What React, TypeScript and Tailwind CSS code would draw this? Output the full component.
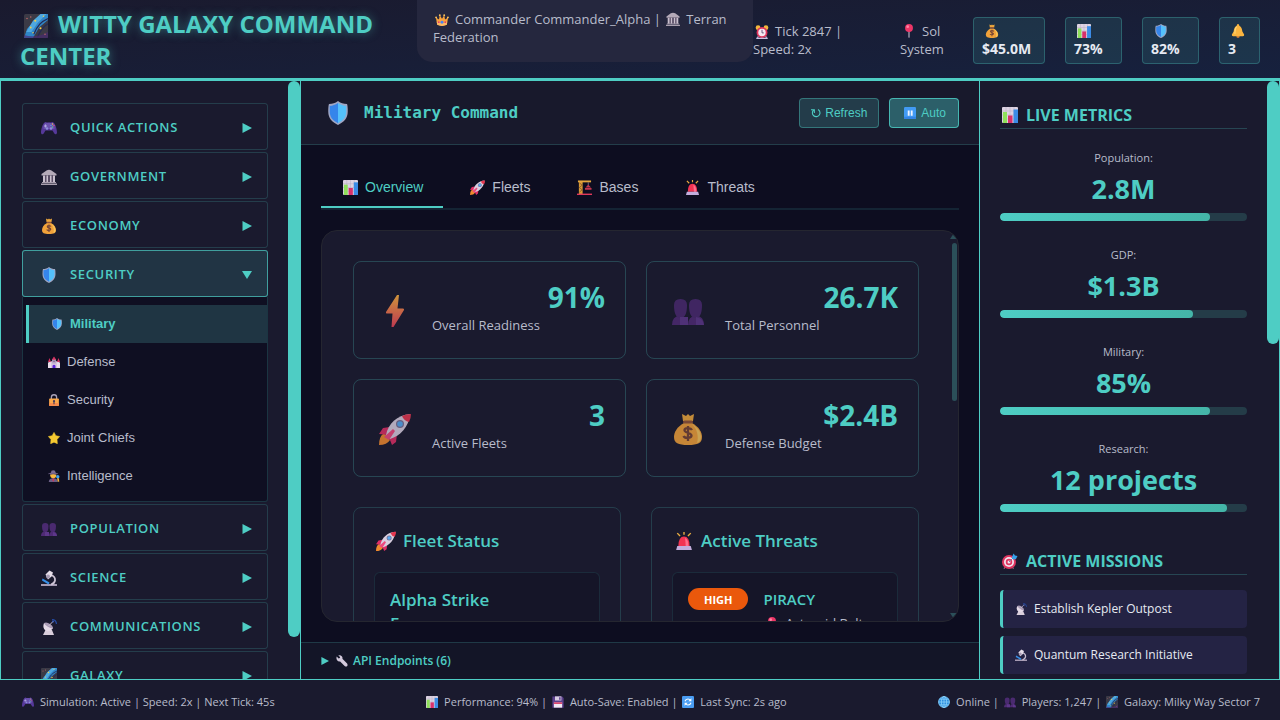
import type { ReactNode } from 'react';

const art: Record<string, ReactNode> = {
  galaxy: (
    <>
      <rect width="32" height="32" rx="2" fill="#3b3a46" />
      <path d="M0 32 4 20 16 6 24 0h8v8L20 18l-8 14z" fill="#2f86c8" />
      <path d="M10 24 18 12 30 0h-8L12 9 3 24z" fill="#4fa8e0" />
      <path d="M13 27C18 15 23 10 32 6M18 31c4-10 8-15 14-18" stroke="#252a55" strokeWidth="1.8" fill="none" />
      <path d="M0 28c10 3 22 2 32-4v8H0z" fill="#4b2a73" opacity=".65" />
      <g fill="#f2cf4a"><circle cx="15" cy="9" r="1.4" /><circle cx="9" cy="18" r="1.2" /><circle cx="22" cy="19" r="1.4" /><circle cx="26" cy="3" r="1" /><circle cx="12" cy="25" r="1" /></g>
      <g fill="#c26a6a"><circle cx="4" cy="6" r="1" /><circle cx="9" cy="4" r="1" /><circle cx="28" cy="27" r="1" /></g>
    </>
  ),
  crown: (
    <>
      <path d="M2 10 9 15 11 5l5 8 5-8 2 10 7-5-3 17q-11 5-22 0z" fill="#f9a33c" />
      <path d="M4 20q12 5 24 0l-1 7q-11 5-22 0z" fill="#fbb865" />
      <g fill="#fcc05a"><circle cx="2.5" cy="10" r="2.2" /><circle cx="11" cy="5" r="2.2" /><circle cx="21" cy="5" r="2.2" /><circle cx="29.500" cy="10" r="2.200" /></g>
      <circle cx="16" cy="21" r="3.4" fill="#4a82f0" />
      <circle cx="8.500" cy="21" r="2" fill="#e8396b" />
      <circle cx="23.500" cy="21" r="2" fill="#e8396b" />
    </>
  ),
  building: (
    <>
      <path d="M1 10 11 3q5-3 10 0l10 7v3H1z" fill="#b4aab8" />
      <path d="M4 13h24v14H4z" fill="#5a4e66" />
      <path d="M4 13h4v14H4zM11 13h3v14h-3zM18 13h3v14h-3zM24 13h4v14h-4z" fill="#c9c0cd" />
      <path d="M2 26h28v2H2zM0 29h32v3H0z" fill="#aaa0af" />
    </>
  ),
  clock: (
    <>
      <circle cx="7" cy="6" r="5.500" fill="#f5b83d" />
      <circle cx="25" cy="6" r="5.500" fill="#f5b83d" />
      <path d="m8 25-3 6m19-6 3 6" stroke="#b4a3c9" strokeWidth="3" />
      <circle cx="16" cy="17" r="12.500" fill="#e0345c" />
      <circle cx="16" cy="17" r="8.500" fill="#f4e8f2" />
      <path d="M16 11v7h4" stroke="#5c4a70" strokeWidth="2" fill="none" />
      <path d="M3 29h26v3H3z" fill="#cdbfe0" />
    </>
  ),
  pin: (
    <>
      <path d="M14.500 15h3v15l-1.500 2-1.500-2z" fill="#a9a3b5" />
      <circle cx="16" cy="9" r="9" fill="#ed3667" />
      <circle cx="13" cy="6" r="3" fill="#ff86a5" />
    </>
  ),
  money: (
    <>
      <path d="m10 1 4 2 2-2 2 2 4-2-1 7H11z" fill="#eea83c" />
      <path d="M12 10h8c7 4 10 9 10 14 0 6-4 8-14 8S2 30 2 24c0-5 3-10 10-14z" fill="#f1a23a" />
      <path d="M20 11c6 4 9 8 9 13 0 3-1 5-4 6 2-7 0-14-5-19z" fill="#f6c45b" />
      <rect x="11" y="7.500" width="10" height="3" rx="1.500" fill="#92553a" />
      <path d="M20 17c-1-2-7-3-7.500 0s7 2.500 7 5.500-7 3-8 .5M16 13v15" stroke="#774535" strokeWidth="2.300" fill="none" />
    </>
  ),
  chart: (
    <>
      <rect width="32" height="32" rx="2" fill="#ddd3e2" />
      <path d="M0 8h32M0 16h32M0 24h32M8 0v32M16 0v32M24 0v32" stroke="#b5a9c0" strokeWidth="1" />
      <path d="M2 10h8v22H2z" fill="#8fe05a" />
      <path d="M12 17h9v15h-9z" fill="#d9316b" />
      <path d="M23 5h9v27h-9z" fill="#3b8ce6" />
    </>
  ),
  shield: (
    <>
      <path d="M16 0c4 3 7 4 12 4q1 2 1 10c0 9-5 14-13 18C8 28 3 23 3 14Q3 6 4 4c5 0 8-1 12-4z" fill="#9fa6c4" />
      <path d="M16 2.500v27C9 26 5 21.500 5 14V6.500c4-.5 7-1.500 11-4z" fill="#3585ea" />
      <path d="M16 2.500v27c7-3.500 11-8 11-15.500V6.500c-4-.5-7-1.500-11-4z" fill="#54c1fb" />
    </>
  ),
  bell: (
    <>
      <path d="M12 26h8q0 6-4 6t-4-6z" fill="#d27d36" />
      <path d="M16 0q3 0 3 4c5 2 6 7 7 13l4 7q1 4-3 4H5q-4 0-3-4l4-7c1-6 2-11 7-13q0-4 3-4z" fill="#fbb540" />
      <path d="M13 6c-3 3-4 8-4 16" stroke="#ffd878" strokeWidth="2.500" fill="none" />
    </>
  ),
  gamepad: (
    <>
      <path d="M6 6q3-3 6-1h8q3-2 6 1c3 3 6 13 6 19 0 4-4 5-6 1l-3-5H9l-3 5c-2 4-6 3-6-1C0 19 3 9 6 6z" fill="#56399a" />
      <path d="M7 7q9-3 18 0 3 7 2 11H5Q4 12 7 7z" fill="#6a51ad" />
      <path d="M9 9v6m-3-3h6" stroke="#b0a7e0" strokeWidth="2" />
      <circle cx="12" cy="17" r="2.500" fill="#8e8edb" />
      <circle cx="20" cy="17" r="2.500" fill="#8e8edb" />
      <circle cx="23" cy="8" r="1.300" fill="#f2c84b" />
      <circle cx="26" cy="11" r="1.300" fill="#ef5c6e" />
      <circle cx="20" cy="11" r="1.300" fill="#5da8f1" />
      <circle cx="23" cy="14" r="1.300" fill="#5fd38a" />
    </>
  ),
  people: (
    <>
      <path d="M0 30q0-9 8-9t8 9zM16 30q0-9 8-9t8 9z" fill="#4f2b75" />
      <path d="M2 10q0-6 6.500-6T15 10q0 13-6.500 13T2 10zM17 10q0-6 6.500-6T30 10q0 13-6.500 13T17 10z" fill="#4a2a70" />
      <path d="M8 22h8v8H8zM24 22q7 1 8 8h-8z" fill="#5d378a" />
    </>
  ),
  castle: (
    <>
      <path d="M2 14h28v18H2z" fill="#d8c7dc" />
      <path d="M11 8h10v12H11z" fill="#b9a5c6" />
      <path d="m0 16 4-11 4 11zM24 16l4-11 4 11zM10 10l6-9 6 9z" fill="#d3305f" />
      <path d="M0 17h8v15H0zM24 17h8v15h-8z" fill="#eadde9" />
      <path d="M12 32v-6q4-6 8 0v6z" fill="#5b22d8" />
      <circle cx="16" cy="14" r="2" fill="#6b5680" />
    </>
  ),
  lock: (
    <>
      <path d="M9 15V9q0-7 7-7t7 7v6" stroke="#a9a1b8" strokeWidth="3.500" fill="none" />
      <rect x="3" y="12" width="26" height="20" rx="2" fill="#fba94b" />
      <path d="M3 24h26v6q0 2-2 2H5q-2 0-2-2z" fill="#f58b4d" />
      <circle cx="16" cy="19" r="3" fill="#493c5c" />
      <path d="M14.500 19h3v8h-3z" fill="#493c5c" />
    </>
  ),
  star: <path d="m16 1 5 9 10 2-7 8 1 11-9-4-9 4 1-11-7-8 10-2z" fill="#f5c931" stroke="#f5c931" strokeWidth="1.500" strokeLinejoin="round" />,
  detective: (
    <>
      <path d="M2 32q0-10 12-11 12 1 12 11z" fill="#6b5f86" />
      <circle cx="14" cy="14" r="8" fill="#f7b83e" />
      <path d="M6 13V7q8-3 16 0v6q-8-3-16 0z" fill="#5d4e74" />
      <path d="M8 8l1-6q5-3 10 0l1 6zM1 9q13-4 26 0v2q-13-3-26 0z" fill="#7a6b92" />
      <path d="m14 21 3 5-3 6-3-6z" fill="#c8365d" />
      <circle cx="26" cy="18" r="4.500" fill="#3fa4ef" />
      <path d="m24 22 2 9h4l-1-9z" fill="#f2b13b" />
    </>
  ),
  microscope: (
    <>
      <path d="M0 28h32v4H0z" fill="#a69bb3" />
      <path d="M20 10q9 3 8 11-1 6-8 8" stroke="#cfc5d6" strokeWidth="3.500" fill="none" />
      <path d="m9 9 8-8 7 4-3 8-7 6z" fill="#e6dee9" />
      <circle cx="14" cy="13" r="4" fill="#a69bb3" />
      <path d="m3 17 14 8-2 4L2 21z" fill="#3790e8" />
    </>
  ),
  dish: (
    <>
      <path d="m10 20 12 2 4 10H4z" fill="#d9cedb" />
      <path d="M6 8q-4 10 3 15 8 4 15-4z" fill="#e4d9e6" />
      <path d="M6 8q5-3 12 2t6 9q-5 0-11-4T6 8z" fill="#a99bb5" />
      <path d="m15 14 9-9" stroke="#c8bdce" strokeWidth="2" />
      <circle cx="24" cy="5" r="2" fill="#4262b8" />
      <path d="M22 1q8 0 9 9" stroke="#24489c" strokeWidth="2.500" fill="none" />
    </>
  ),
  rocket: (
    <>
      <path d="M4 21q5-1 7 6-3 5-11 5 0-8 4-11z" fill="#f08a2e" />
      <path d="M11 14 4 15l-4 6 9 1zM18 21l-1 8-4 3-4-10z" fill="#de2f66" />
      <path d="M7 22C9 11 18 2 31 1 30 14 21 23 11 26z" fill="#d9cfe0" />
      <path d="M23 3q4-2 9-2 0 4-2 8-5-1-7-6z" fill="#e5364f" />
      <circle cx="21" cy="11" r="4" fill="#7b7195" />
      <circle cx="21" cy="11" r="2.800" fill="#56a9f0" />
      <path d="m5 24 9-8 2 2-6 9z" fill="#ef4a7e" />
    </>
  ),
  crane: (
    <>
      <path d="M4 2h8v28H4z" fill="#d89a34" />
      <path d="M5 6l6 5-6 5 6 5-6 5" stroke="#7a4a2c" strokeWidth="1.500" fill="none" />
      <path d="M2 1h28v4H2z" fill="#e5a63c" />
      <path d="M24 5v7" stroke="#9b8ba8" strokeWidth="1.500" />
      <path d="m24 10 6 6H18zM17 17h14v4H17z" fill="#c53650" />
      <path d="M0 29h32v3H0z" fill="#e2395a" />
    </>
  ),
  siren: (
    <>
      <path d="M6 25q0-17 10-17t10 17z" fill="#f23352" />
      <path d="M18 10q6 3 6 15h-5z" fill="#ff6e8c" />
      <path d="M4 25h24l2 7H2z" fill="#c2addc" />
      <path d="M16 5V0M9 7 4 2M23 7l5-5" stroke="#e9ac42" strokeWidth="2.500" />
    </>
  ),
  pause: (
    <>
      <rect width="32" height="32" rx="3" fill="#429bf4" />
      <path d="M0 26h32v3q0 3-3 3H3q-3 0-3-3z" fill="#3383e4" />
      <path d="M10 9h5v14h-5zM18 9h5v14h-5z" fill="#eef3ff" />
    </>
  ),
  bolt: (
    <>
      <defs><linearGradient id="bolt" x2="0" y2="1"><stop stopColor="#fdb33f" /><stop offset="1" stopColor="#e8425a" /></linearGradient></defs>
      <path d="M18 0 7 17q-.5 1.500 1 1.500h5.500L12.500 32h2L25 15q.500-1.500-1-1.500h-5.500L20 0z" fill="url(#bolt)" />
    </>
  ),
  wrench: (
    <path d="M2 4 7 9l3-1 1-3-5-4q6-2 10 3 2 3 1 6l12 12q3 4 1 7-3 3-7 0L11 17q-5 1-8-3T2 4z" fill="#d3c9dc" />
  ),
  floppy: (
    <>
      <path d="M1 1h26l4 4v26H1z" fill="#5b3f8c" />
      <path d="M8 1h17v11H8z" fill="#d7cbe0" /><path d="M19 3h4v7h-4z" fill="#5b3f8c" />
      <path d="M5 17h22v14H5z" fill="#f1e9f3" /><path d="M5 17h22v4H5z" fill="#d8325c" />
    </>
  ),
  sync: (
    <>
      <rect width="32" height="32" rx="3" fill="#4a9df3" />
      <path d="M8 14q2-6 8-6 4 0 7 4m1 6q-2 6-8 6-4 0-7-4" stroke="#fff" strokeWidth="3" fill="none" />
      <path d="M25 6v8h-8zM7 26v-8h8z" fill="#fff" />
    </>
  ),
  globe: (
    <>
      <circle cx="16" cy="16" r="15" fill="#2d8fe0" />
      <g stroke="#8fd4fa" strokeWidth="2" fill="none"><circle cx="16" cy="16" r="14.500" /><ellipse cx="16" cy="16" rx="7" ry="15" /><path d="M16 1v30M1 16h30M4 8.500h24M4 23.500h24" /></g>
    </>
  ),
  dart: (
    <>
      <path d="m7 26-3 6m16-6 3 6" stroke="#8c5a70" strokeWidth="2.500" />
      <circle cx="14" cy="18" r="14" fill="#df3560" />
      <circle cx="14" cy="18" r="10" fill="#f1e4ee" />
      <circle cx="14" cy="18" r="6.500" fill="#df3560" />
      <circle cx="14" cy="18" r="3" fill="#f1e4ee" />
      <path d="m14 18 10-10" stroke="#8b7f9d" strokeWidth="2" />
      <path d="m20 8 3-7 3 4 5 1-3 6-5 1-3-2z" fill="#35a0ea" />
    </>
  ),
};

function Icon({ name, className = 'size-4' }: { name: string; className?: string }) {
  return (
    <svg viewBox="0 0 32 32" className={`inline-block shrink-0 ${className}`} aria-hidden="true">
      {art[name]}
    </svg>
  );
}

function Triangle({ open = false, className = 'size-[9px]' }: { open?: boolean; className?: string }) {
  return (
    <svg viewBox="0 0 10 10" className={`shrink-0 ${className}`} fill="currentColor" aria-hidden="true">
      <path d={open ? 'M0 1h10L5 9z' : 'M0.500 0 10 5 0.500 10z'} />
    </svg>
  );
}

const resources = [
  { icon: 'money', value: '$45.0M', label: 'Treasury', box: 'w-[72px]' },
  { icon: 'chart', value: '73%', label: 'Approval', box: 'w-[57px]' },
  { icon: 'shield', value: '82%', label: 'Security', box: 'w-[57px]' },
  { icon: 'bell', value: '3', label: 'Alerts', box: 'w-[41px]' },
];

const groups = [
  { icon: 'gamepad', label: 'QUICK ACTIONS' },
  { icon: 'building', label: 'GOVERNMENT' },
  { icon: 'money', label: 'ECONOMY' },
  {
    icon: 'shield',
    label: 'SECURITY',
    items: [
      { icon: 'shield', label: 'Military', active: true },
      { icon: 'castle', label: 'Defense' },
      { icon: 'lock', label: 'Security' },
      { icon: 'star', label: 'Joint Chiefs' },
      { icon: 'detective', label: 'Intelligence' },
    ],
  },
  { icon: 'people', label: 'POPULATION' },
  { icon: 'microscope', label: 'SCIENCE' },
  { icon: 'dish', label: 'COMMUNICATIONS' },
  { icon: 'galaxy', label: 'GALAXY' },
];

const tabs = [
  { icon: 'chart', label: 'Overview' },
  { icon: 'rocket', label: 'Fleets' },
  { icon: 'crane', label: 'Bases' },
  { icon: 'siren', label: 'Threats' },
];

const stats = [
  { icon: 'bolt', value: '91%', label: 'Overall Readiness' },
  { icon: 'people', value: '26.7K', label: 'Total Personnel' },
  { icon: 'rocket', value: '3', label: 'Active Fleets' },
  { icon: 'money', value: '$2.4B', label: 'Defense Budget' },
];

const metrics = [
  { label: 'Population:', value: '2.8M', percent: 85 },
  { label: 'GDP:', value: '$1.3B', percent: 78 },
  { label: 'Military:', value: '85%', percent: 85 },
  { label: 'Research:', value: '12 projects', percent: 92 },
];

const missions = [
  { icon: 'dish', label: 'Establish Kepler Outpost' },
  { icon: 'microscope', label: 'Quantum Research Initiative' },
];

function TopBar() {
  return (
    <header className="flex h-20 shrink-0 items-center overflow-hidden border-b-2 border-[#4ecdc4] bg-linear-to-br from-[#1a1a2e] to-[#16213e] px-5 pt-0.5">
      <h1 className="w-[397px] shrink-0 text-[24px] leading-8 font-bold text-[#4ecdc4] [text-shadow:0_0_10px_rgb(78_205_196/0.5)]">
        <Icon name="galaxy" className="mr-2.5 ml-1 size-6 align-[-5px]" />
        WITTY GALAXY COMMAND CENTER
      </h1>
      <div className="-mt-10 w-[336px] shrink-0 rounded-[15px] bg-[#25273e] px-4 pt-8 pb-4 text-[13px] leading-[18px] text-[#b8bccb]">
        <Icon name="crown" className="mr-1.5 ml-0.5 size-3.5 align-[-3px]" />
        Commander Commander_Alpha | <Icon name="building" className="mr-1.5 ml-0.5 size-3.5 align-[-2px]" />
        Terran Federation
      </div>
      <div className="w-[147px] shrink-0 text-[13px] leading-[18px] text-[#b8bccb]">
        <Icon name="clock" className="mr-1.5 ml-0.5 size-3.5 align-[-3px]" />
        Tick 2847 |<br />
        Speed: 2x
      </div>
      <div className="mr-auto w-12 shrink-0 text-[13px] leading-[18px] text-[#b8bccb]">
        <Icon name="pin" className="mr-1.5 ml-0.5 size-3.5 align-[-2px]" />
        Sol System
      </div>
      <div className="flex shrink-0 gap-5">
        {resources.map((r) => (
          <div
            key={r.label}
            title={r.label}
            className={`flex h-[47px] flex-col justify-center rounded border border-[#4ecdc4]/30 bg-[#4ecdc4]/12 px-2 text-[14px] leading-[18px] font-bold text-[#e6eaf2] ${r.box}`}
          >
            <span className="flex h-[18px] items-center pl-[3px]">
              <Icon name={r.icon} className="size-3.5" />
            </span>
            {r.value}
          </div>
        ))}
      </div>
    </header>
  );
}

function Sidebar() {
  return (
    <aside className="flex w-[299px] shrink-0 bg-[#1a1a2e]">
      <nav className="flex min-w-0 flex-1 flex-col gap-0.5 overflow-y-auto pt-[22px] pr-5 pl-[21px] [scrollbar-width:none]">
        {groups.map((g) => (
          <div key={g.label} className="shrink-0">
            <button
              className={`flex h-[47px] w-full items-center rounded-[3px] border pt-0.5 pr-[15px] pl-[18px] text-[13px] font-semibold tracking-wider text-[#4ecdc4] ${
                g.items ? 'border-[#4ecdc4]/70 bg-[#213444]' : 'border-[#4ecdc4]/20'
              }`}
            >
              <Icon name={g.icon} className="mr-[13px] size-4" />
              {g.label}
              <Triangle open={!!g.items} className="ml-auto size-[10px]" />
            </button>
            {g.items && (
              <ul className="rounded-b-[3px] border border-t-0 border-[#4ecdc4]/20 bg-[#0f0f22] pt-2 pb-1.5">
                {g.items.map((item) => (
                  <li key={item.label} className="pl-[3px]">
                    <a
                      href="#"
                      className={`flex h-[38px] items-center gap-[7px] font-['Liberation_Sans',sans-serif] text-[13px] ${
                        item.active ? 'border-l-3 border-[#4ecdc4] bg-[#1f3543] pl-[22px] font-bold text-[#4ecdc4]' : 'pl-[22px] text-[#b8bccb]'
                      }`}
                    >
                      <Icon name={item.icon} className="size-3" />
                      {item.label}
                    </a>
                  </li>
                ))}
              </ul>
            )}
          </div>
        ))}
      </nav>
      <div className="w-3 shrink-0">
        <div className="h-[93%] rounded-full bg-[#4ecdc4]" />
      </div>
    </aside>
  );
}

function FleetCard() {
  return (
    <section className="rounded-lg border border-[#4ecdc4]/20 p-5">
      <h3 className="mb-[18px] flex h-[26px] items-center gap-[7px] pl-0.5 text-[17px] font-semibold text-[#4ecdc4]">
        <Icon name="rocket" className="size-5" />
        Fleet Status
      </h3>
      <div className="rounded-md border border-[#4ecdc4]/12 bg-[#151528] p-[15px]">
        <h4 className="w-32 text-[17px] leading-6 font-semibold text-[#4ecdc4]">Alpha Strike Force</h4>
      </div>
    </section>
  );
}

function ThreatCard() {
  return (
    <section className="rounded-lg border border-[#4ecdc4]/20 p-5">
      <h3 className="mb-[18px] flex h-[26px] items-center gap-2 pl-[3px] text-[17px] font-semibold text-[#4ecdc4]">
        <Icon name="siren" className="size-[18px]" />
        Active Threats
      </h3>
      <div className="flex gap-[15px] rounded-md border border-[#4ecdc4]/12 bg-[#151528] p-[15px]">
        <span className="h-[22px] rounded-full bg-[#ea580c] px-4 text-[11px] leading-[23px] font-bold text-white">HIGH</span>
        <div>
          <h4 className="text-[15px] leading-[22px] font-semibold text-[#4ecdc4]">PIRACY</h4>
          <p className="mt-1 flex h-5 items-center gap-1.5 text-[13px] text-[#b8bccb]">
            <Icon name="pin" className="ml-0.5 size-3.5" />
            Asteroid Belt
          </p>
        </div>
      </div>
    </section>
  );
}

function Workspace() {
  return (
    <main className="flex min-w-0 flex-1 flex-col bg-[#0d0d20]">
      <div className="flex h-16 shrink-0 items-center border-b border-[#4ecdc4]/20 bg-[#18192c] pr-5 pl-[25px]">
        <Icon name="shield" className="mr-3.5 size-6" />
        <h2 className="font-['DejaVu_Sans_Mono',monospace] text-[16px] font-bold text-[#4ecdc4]">Military Command</h2>
        <div className="ml-auto flex gap-2.5 font-['Liberation_Sans',sans-serif] text-[12px] text-[#4ecdc4]">
          <button className="flex h-[30px] items-center gap-1 rounded border border-[#4ecdc4]/40 bg-[#233c4a] px-[11px]">
            <svg viewBox="0 0 12 12" className="size-2.5" fill="none" stroke="currentColor" strokeWidth="1.300" aria-hidden="true">
              <path d="M8.500 1.800A4.600 4.600 0 1 1 3 2.500M0 2h4v4" />
            </svg>
            Refresh
          </button>
          <button className="flex h-[30px] items-center gap-[5px] rounded border border-[#4ecdc4]/80 bg-[#2c5f69] pr-3 pl-3.5">
            <Icon name="pause" className="size-3" />
            Auto
          </button>
        </div>
      </div>

      <div className="flex min-h-0 flex-1 flex-col p-5">
        <div role="tablist" className="mb-5 flex h-[45px] shrink-0 gap-[5px] border-b-2 border-[#4ecdc4]/12">
          {tabs.map((t, i) => (
            <button
              key={t.label}
              role="tab"
              aria-selected={i === 0}
              className={`flex items-center gap-[7px] border-b-2 pt-1 pr-5 pl-[22px] font-['Liberation_Sans',sans-serif] text-[14px] ${
                i === 0 ? 'border-[#4ecdc4] text-[#4ecdc4]' : 'border-transparent text-[#b8bccb]'
              }`}
            >
              <Icon name={t.icon} className="size-[15px]" />
              {t.label}
            </button>
          ))}
        </div>

        <div className="flex min-h-0 flex-1 overflow-hidden rounded-2xl border border-[#252630] bg-[#1a1a2e]">
          <div className="min-w-0 flex-1 overflow-y-auto px-[31px] py-[30px] [scrollbar-width:none]">
            <div className="mb-[30px] grid grid-cols-2 gap-5">
              {stats.map((s) => (
                <div key={s.label} className="flex h-[98px] items-center rounded-lg border border-[#4ecdc4]/25 px-5 pb-0.5">
                  <Icon name={s.icon} className="mt-1 mr-[21px] ml-[5px] size-8 opacity-80" />
                  <div className="flex min-w-0 flex-1 flex-col">
                    <div className="text-right text-[28px] leading-8 font-bold text-[#4ecdc4]">{s.value}</div>
                    <div className="text-[13px] leading-6 text-[#b8bccb]">{s.label}</div>
                  </div>
                </div>
              ))}
            </div>
            <div className="grid grid-cols-2 gap-[30px]">
              <FleetCard />
              <ThreatCard />
            </div>
          </div>
          <div className="flex w-2 shrink-0 flex-col items-center py-0.5 text-[#2b4f59]">
            <svg viewBox="0 0 8 6" className="mb-1 h-1.5 w-2 shrink-0" fill="currentColor" aria-hidden="true"><path d="M4 0 8 6H0z" /></svg>
            <div className="mb-auto h-[41%] w-[5px] rounded-full bg-[#2b4f59]" />
            <svg viewBox="0 0 8 6" className="h-1.5 w-2 shrink-0" fill="currentColor" aria-hidden="true"><path d="M0 0h8L4 6z" /></svg>
          </div>
        </div>
      </div>

      <details className="shrink-0 border-t border-[#4ecdc4]/20 bg-[#131527]">
        <summary className="flex h-9 list-none items-center px-5 text-[12px] font-semibold text-[#4ecdc4]">
          <Triangle className="mr-[7px] size-2" />
          <Icon name="wrench" className="mr-[5px] size-3" />
          API Endpoints (6)
        </summary>
      </details>
    </main>
  );
}

function PanelHeading({ icon, children }: { icon: string; children: ReactNode }) {
  return (
    <h2 className="flex h-[28px] items-center gap-2 border-b border-[#4ecdc4]/25 pl-0.5 text-[16px] font-bold text-[#4ecdc4]">
      <Icon name={icon} className="size-4" />
      {children}
    </h2>
  );
}

function MetricsPanel() {
  return (
    <aside className="flex w-[299px] shrink-0 bg-[#1a1a2e]">
      <div className="min-w-0 flex-1 overflow-y-auto px-5 pt-5 [scrollbar-width:none]">
        <PanelHeading icon="chart">LIVE METRICS</PanelHeading>
        <div className="mt-5 mb-[35px] flex flex-col gap-[25px]">
          {metrics.map((m) => (
            <div key={m.label} className="text-center">
              <div className="text-[11px] leading-[18px] text-[#b8bccb]">{m.label}</div>
              <div className="mt-1 mb-1.5 text-[27px] leading-9 font-bold text-[#4ecdc4]">{m.value}</div>
              <div className="h-2 overflow-hidden rounded-full bg-[#243c48]">
                <div className="h-full rounded-full bg-linear-to-r from-[#4ecdc4] to-[#44b5a8]" style={{ width: `${m.percent}%` }} />
              </div>
            </div>
          ))}
        </div>
        <PanelHeading icon="dart">ACTIVE MISSIONS</PanelHeading>
        <ul className="mt-[15px] flex flex-col gap-2">
          {missions.map((m) => (
            <li key={m.label} className="flex h-[38px] items-center gap-[7px] rounded border-l-3 border-[#4ecdc4] bg-[#242344] pl-3 text-[12px] text-[#e6eaf2]">
              <Icon name={m.icon} className="size-3" />
              {m.label}
            </li>
          ))}
        </ul>
      </div>
      <div className="w-3 shrink-0">
        <div className="h-[44%] rounded-full bg-[#4ecdc4]" />
      </div>
    </aside>
  );
}

function StatusBar() {
  return (
    <footer className="flex h-10 shrink-0 items-center justify-between bg-[#1a1a2e] pt-1 pr-5 pl-[22px] text-[11px] text-[#b8bccb]">
      <span>
        <Icon name="gamepad" className="mr-1.5 size-3 align-[-2px]" />
        Simulation: Active | Speed: 2x | Next Tick: 45s
      </span>
      <span>
        <Icon name="chart" className="mr-1.5 size-3 align-[-2px]" />
        Performance: 94% | <Icon name="floppy" className="mr-1.5 ml-0.5 size-3 align-[-2px]" />
        Auto-Save: Enabled | <Icon name="sync" className="mr-1.5 ml-0.5 size-3 align-[-2px]" />
        Last Sync: 2s ago
      </span>
      <span>
        <Icon name="globe" className="mr-1.5 size-3 align-[-2px]" />
        Online | <Icon name="people" className="mr-1.5 ml-0.5 size-3 align-[-2px]" />
        Players: 1,247 | <Icon name="galaxy" className="mr-1.5 ml-0.5 size-3 align-[-2px]" />
        Galaxy: Milky Way Sector 7
      </span>
    </footer>
  );
}

export default function App() {
  return (
    <div className="flex h-screen flex-col overflow-hidden bg-[#0d0d20] font-['Open_Sans','Noto_Sans',sans-serif]">
      <TopBar />
      <div className="flex min-h-0 flex-1 gap-px bg-[#4ecdc4] p-px">
        <Sidebar />
        <Workspace />
        <MetricsPanel />
      </div>
      <StatusBar />
    </div>
  );
}
